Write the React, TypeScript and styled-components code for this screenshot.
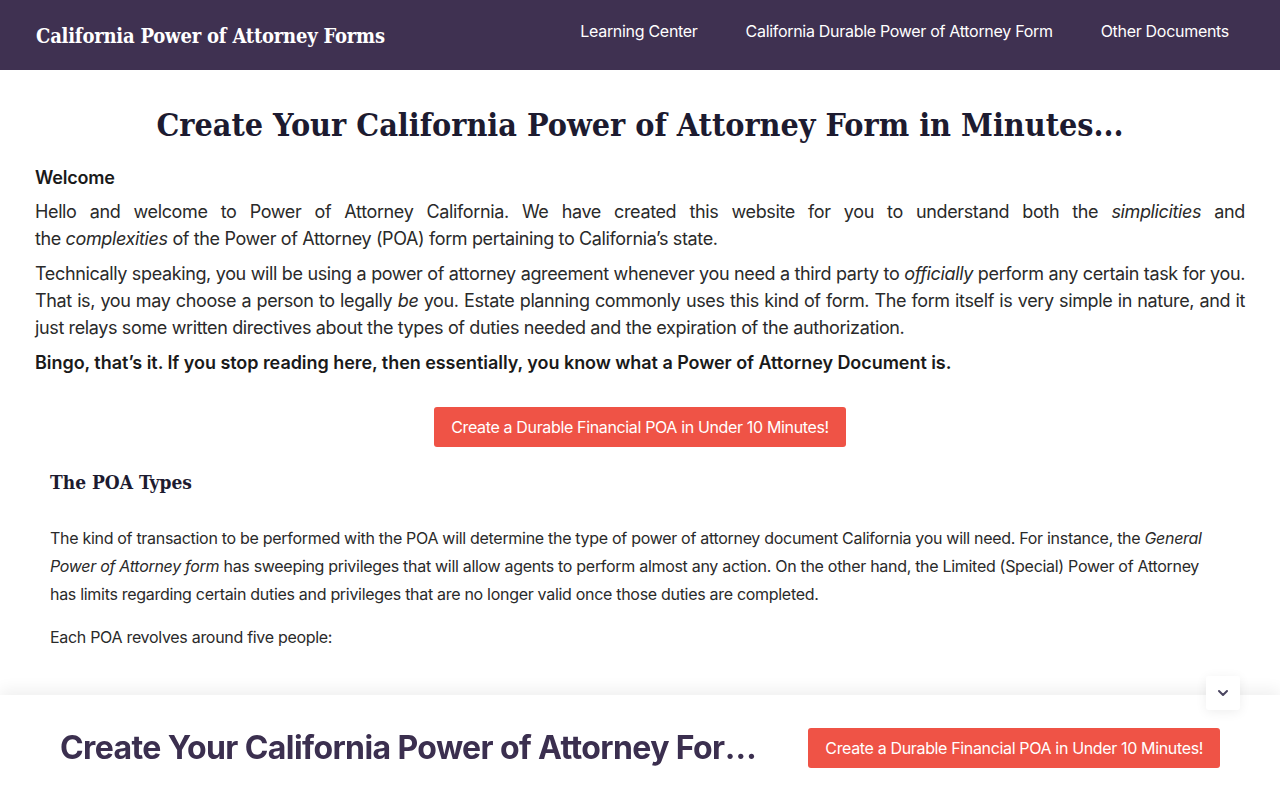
import styled, { createGlobalStyle } from 'styled-components';

const Global = createGlobalStyle`
  html, body { margin: 0; padding: 0; background: #fff; }
  body {
    font-family: Inter, "Noto Sans", sans-serif;
    color: #222;
    -webkit-font-smoothing: antialiased;
  }
  * { box-sizing: border-box; }
`;

const Header = styled.header`
  height: 70px;
  background: #3f3151;
  display: flex;
  align-items: center;
  justify-content: space-between;
  padding: 0 51px 0 36px;
`;

const Logo = styled.a`
  font-family: "DejaVu Serif Condensed", "Liberation Serif", serif;
  font-weight: 700;
  font-size: 20px;
  color: #fff;
  text-decoration: none;
  letter-spacing: -0.2px;
  padding-top: 1px;
`;

const Nav = styled.nav`
  display: flex;
  gap: 48px;
  padding-bottom: 8px;
`;

const NavLink = styled.a`
  color: #fff;
  font-size: 16px;
  letter-spacing: -0.3px;
  text-decoration: none;
`;

const Main = styled.main`
  padding: 0 35px 140px;
`;

const Title = styled.h1`
  font-family: "DejaVu Serif Condensed", "Liberation Serif", serif;
  font-weight: 700;
  font-size: 32px;
  line-height: 40px;
  color: #1d1b30;
  text-align: center;
  margin: 35px 0 22px;
`;

const Lead = styled.h4`
  font-size: 18px;
  font-weight: 600;
  color: #1a1a1a;
  margin: 0 0 10px;
  letter-spacing: -0.2px;
`;

const Para = styled.p<{ $bold?: boolean }>`
  font-size: 18px;
  line-height: 27px;
  margin: 0 0 8px;
  text-align: justify;
  letter-spacing: ${(p) => (p.$bold ? '-0.05px' : '-0.37px')};
  font-weight: ${(p) => (p.$bold ? 600 : 400)};
  color: ${(p) => (p.$bold ? '#1a1a1a' : '#2a2a2a')};
`;

const Keep = styled.span`
  white-space: nowrap;
`;

const Center = styled.div`
  display: flex;
  justify-content: center;
  margin: 31px 0 24px;
`;

const CtaButton = styled.a`
  display: inline-flex;
  align-items: center;
  justify-content: center;
  height: 40px;
  padding: 0 17px;
  background: #ef5346;
  color: #fff;
  font-size: 16px;
  letter-spacing: -0.35px;
  border-radius: 3px;
  text-decoration: none;
  white-space: nowrap;
`;

const Section = styled.section`
  padding: 0 40px 0 15px;
`;

const SubTitle = styled.h2`
  font-family: "DejaVu Serif Condensed", "Liberation Serif", serif;
  font-weight: 700;
  font-size: 19px;
  color: #1d1b30;
  margin: 0 0 31px;
`;

const SmallPara = styled.p`
  font-size: 16px;
  line-height: 28px;
  margin: 0 0 15px;
  letter-spacing: -0.3px;
  color: #2a2a2a;
`;

const StickyBar = styled.div`
  position: fixed;
  left: 0;
  right: 0;
  bottom: 0;
  height: 105px;
  background: #fff;
  box-shadow: 0 -6px 14px rgba(0, 0, 0, 0.06);
  display: flex;
  align-items: center;
  justify-content: space-between;
  padding: 0 60px;
  gap: 48px;
`;

const BarTitle = styled.div`
  font-size: 32px;
  font-weight: 700;
  color: #3b2f4f;
  letter-spacing: -0.6px;
  white-space: nowrap;
  overflow: hidden;
  text-overflow: ellipsis;
  min-width: 0;
  flex: 1;
`;

const ScrollToggle = styled.button`
  position: fixed;
  z-index: 5;
  right: 40px;
  bottom: 90px;
  width: 34px;
  height: 34px;
  border: none;
  border-radius: 3px;
  background: #fff;
  box-shadow: 0 2px 12px rgba(0, 0, 0, 0.07);
  display: flex;
  align-items: center;
  justify-content: center;
  padding: 0;
`;

export default function App() {
  return (
    <>
      <Global />
      <Header>
        <Logo href="#">California Power of Attorney Forms</Logo>
        <Nav>
          <NavLink href="#">Learning Center</NavLink>
          <NavLink href="#">California Durable Power of Attorney Form</NavLink>
          <NavLink href="#">Other Documents</NavLink>
        </Nav>
      </Header>

      <Main>
        <Title>Create Your California Power of Attorney Form in Minutes...</Title>
        <Lead>Welcome</Lead>
        <Para>
          Hello and welcome to Power of Attorney California. We have created this website for you to
          understand both the <em>simplicities</em> and{' '}
          <Keep>the <em>complexities</em> of the Power</Keep> of Attorney (POA) form pertaining to
          California’s state.
        </Para>
        <Para>
          Technically speaking, you will be using a power of attorney agreement whenever you need a
          third party to <em>officially</em> perform any certain task for you. That is, you may choose
          a person to legally <em>be</em> you. Estate planning commonly uses this kind of form. The
          form itself is very simple in nature, and it just relays some written directives about the
          types of duties needed and the expiration of the authorization.
        </Para>
        <Para $bold>
          Bingo, that’s it. If you stop reading here, then essentially, you know what a Power of
          Attorney Document is.
        </Para>

        <Center>
          <CtaButton href="#">Create a Durable Financial POA in Under 10 Minutes!</CtaButton>
        </Center>

        <Section>
          <SubTitle>The POA Types</SubTitle>
          <SmallPara>
            The kind of transaction to be performed with the POA will determine the type of power of
            attorney document California you will need. For instance, the{' '}
            <em>General Power of Attorney form</em> has sweeping privileges that will allow agents to
            perform almost any action. On the other hand, the Limited (Special) Power of Attorney has
            limits regarding certain duties and privileges that are no longer valid once those duties
            are completed.
          </SmallPara>
          <SmallPara>Each POA revolves around five people:</SmallPara>
        </Section>
      </Main>

      <StickyBar>
        <BarTitle>Create Your California Power of Attorney Form in Minutes...</BarTitle>
        <CtaButton href="#">Create a Durable Financial POA in Under 10 Minutes!</CtaButton>
      </StickyBar>

      <ScrollToggle aria-label="Collapse">
        <svg width="16" height="16" viewBox="0 0 24 24" fill="none" stroke="#4a4560" strokeWidth="3" strokeLinecap="round" strokeLinejoin="round">
          <polyline points="6 9 12 15 18 9" />
        </svg>
      </ScrollToggle>
    </>
  );
}
